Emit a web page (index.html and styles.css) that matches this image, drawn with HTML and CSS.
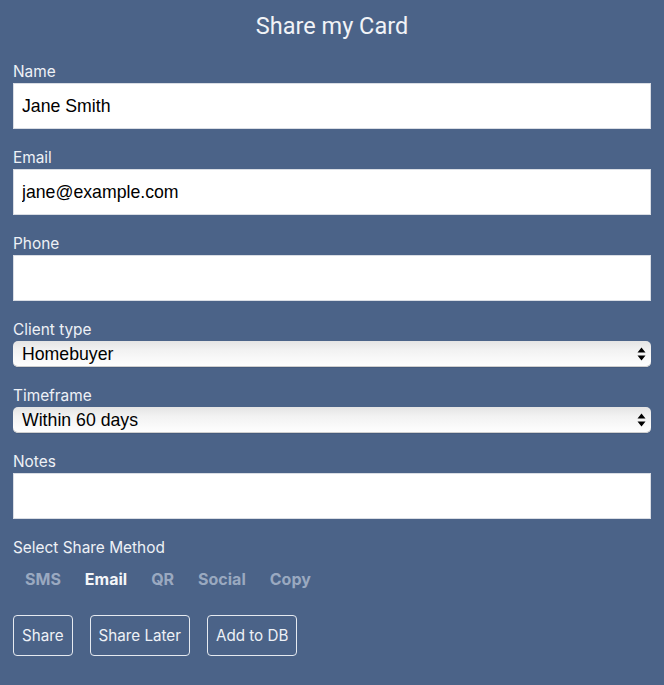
FILE: index.html
```html
<!DOCTYPE html>
<html>
<head>
<meta charset="utf-8">
<link rel="stylesheet" href="styles.css">
</head>
<body>
<div class="page">
  <h1 class="title">Share my Card</h1>
  <div class="field">
    <label class="label">Name</label>
    <input class="input" type="text" value="Jane Smith">
  </div>
  <div class="field">
    <label class="label">Email</label>
    <input class="input" type="text" value="jane@example.com">
  </div>
  <div class="field">
    <label class="label">Phone</label>
    <input class="input" type="text" value="">
  </div>
  <div class="field">
    <label class="label">Client type</label>
    <div class="select-wrap">
      <select class="select"><option>Homebuyer</option></select>
      <svg class="arrows" width="9" height="14" viewBox="0 0 9 14"><path d="M4.5 0.5 L8.5 5.5 L0.5 5.5 Z M4.5 13.5 L8.5 8.5 L0.5 8.5 Z" fill="#000"/></svg>
    </div>
  </div>
  <div class="field">
    <label class="label">Timeframe</label>
    <div class="select-wrap">
      <select class="select"><option>Within 60 days</option></select>
      <svg class="arrows" width="9" height="14" viewBox="0 0 9 14"><path d="M4.5 0.5 L8.5 5.5 L0.5 5.5 Z M4.5 13.5 L8.5 8.5 L0.5 8.5 Z" fill="#000"/></svg>
    </div>
  </div>
  <div class="field">
    <label class="label">Notes</label>
    <input class="input" type="text" value="">
  </div>
  <div class="method">
    <div class="label method-label">Select Share Method</div>
    <div class="tabs">
      <span class="tab">SMS</span>
      <span class="tab active">Email</span>
      <span class="tab">QR</span>
      <span class="tab">Social</span>
      <span class="tab">Copy</span>
    </div>
  </div>
  <div class="actions">
    <button class="btn">Share</button>
    <button class="btn">Share Later</button>
    <button class="btn">Add to DB</button>
  </div>
</div>
</body>
</html>
```

FILE: styles.css
```css
html, body {
  margin: 0;
  padding: 0;
  background: #4b6388;
}
body {
  font-family: Inter, "Noto Sans", sans-serif;
  color: #eef1f6;
}
.page {
  padding: 0 13px 20px 13px;
}
.title {
  margin: 0;
  padding-top: 11px;
  height: 60px;
  box-sizing: border-box;
  font-family: Roboto, Inter, sans-serif;
  font-weight: 400;
  font-size: 23.5px;
  line-height: 30px;
  text-align: center;
  color: #f1f3f7;
}
.field {
  display: flex;
  flex-direction: column;
  margin-bottom: 17px;
}
.label {
  display: block;
  font-family: Inter, sans-serif;
  font-size: 15.4px;
  line-height: 18px;
  height: 18px;
  margin-top: 3px;
  margin-bottom: 2px;
  color: #eef1f6;
}
.input {
  display: block;
  box-sizing: border-box;
  width: 100%;
  height: 46px;
  margin: 0;
  border: 1px solid #d9dde4;
  background: #fff;
  padding: 0 8px;
  font-family: "Liberation Sans", Arial, sans-serif;
  font-size: 17.7px;
  color: #000;
  outline: none;
}
.select-wrap {
  position: relative;
  height: 26px;
}
.select {
  -webkit-appearance: none;
  appearance: none;
  display: block;
  width: 100%;
  height: 26px;
  box-sizing: border-box;
  margin: 0;
  border: none;
  border-radius: 5px;
  padding: 0 9px;
  font-family: "Liberation Sans", Arial, sans-serif;
  font-size: 17.7px;
  color: #000;
  background: linear-gradient(to bottom, #e4e4e4 0%, #f2f2f2 35%, #ffffff 100%);
  box-shadow: inset 0 -1px 0 #cfcfcf, 0 1px 0 rgba(0,0,0,0.08);
  outline: none;
}
.arrows {
  position: absolute;
  right: 5px;
  top: 6px;
  pointer-events: none;
}
.method {
  display: flex;
  flex-direction: column;
  padding-top: 3px;
}
.method-label {
  margin-top: 0;
  margin-bottom: 0;
}
.tabs {
  display: flex;
  margin-top: 12px;
  height: 20px;
  align-items: center;
}
.tab {
  padding: 0 12px;
  font-family: Inter, sans-serif;
  font-weight: 700;
  font-size: 16px;
  color: #9aa9c0;
}
.tab.active {
  color: #f4f6f9;
}
.actions {
  display: flex;
  gap: 17px;
  margin-top: 26px;
}
.btn {
  height: 41px;
  box-sizing: border-box;
  padding: 0 8px;
  border: 1px solid #e6eaf0;
  border-radius: 4px;
  background: transparent;
  color: #eef1f6;
  font-family: Inter, sans-serif;
  font-size: 15.2px;
  cursor: pointer;
}
```
